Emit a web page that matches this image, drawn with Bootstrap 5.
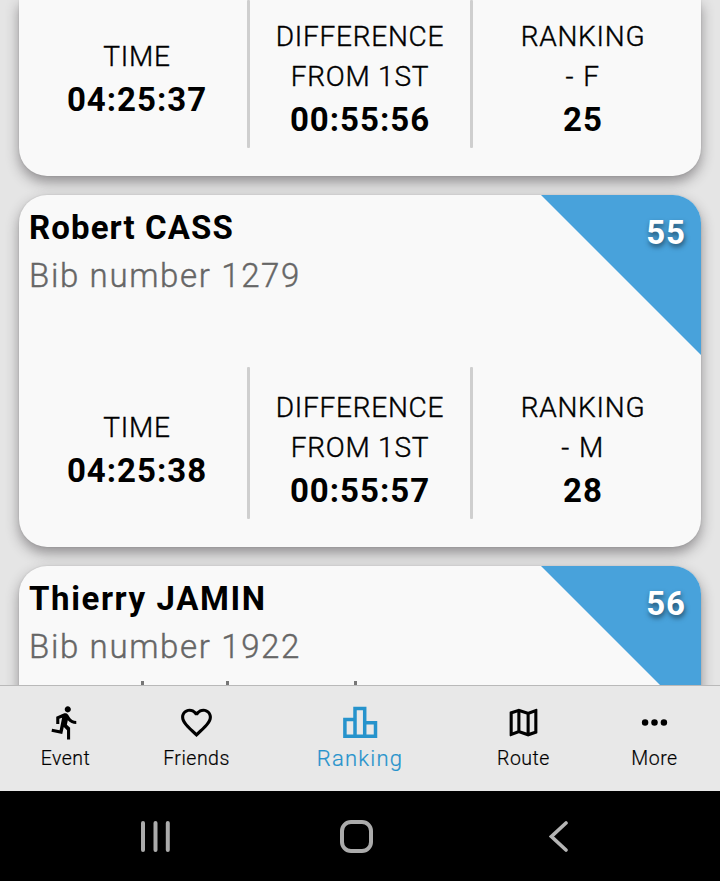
<!DOCTYPE html>
<html lang="en">
<head>
<meta charset="utf-8">
<meta name="viewport" content="width=device-width, initial-scale=1">
<title>Ranking</title>
<link href="https://cdn.jsdelivr.net/npm/bootstrap@5.3.0/dist/css/bootstrap.min.css" rel="stylesheet">
<style>
  body { font-family: Roboto, "Liberation Sans", sans-serif; color: #000; background: #e5e5e5; }
  .phone { height: 881px; }
  .results { padding: 0 19px; gap: 19px; min-height: 0; background: #e5e5e5; }
  .result { --bs-card-border-width: 0; --bs-card-border-radius: 28px; --bs-card-bg: #f9f9f9;
    height: 352px; flex: none; color: #000; box-shadow: 0 6px 13px rgba(45, 40, 45, .45), 0 0 2px rgba(0, 0, 0, .12); }
  .result-tail { height: 176px; border-top-left-radius: 0; border-top-right-radius: 0; }
  .result-head { height: 172px; padding: 9px 10px 0; }
  .runner { font-size: 33px; line-height: 48px; font-weight: 700; letter-spacing: 1.1px; }
  .runner-wide { letter-spacing: 1.6px; }
  .bib { font-size: 33px; line-height: 48px; font-weight: 300; letter-spacing: 1.65px; color: #666; -webkit-text-stroke: .4px #666; }
  .corner { width: 160px; height: 160px; border-top-right-radius: 28px; overflow: hidden; }
  .corner-fill { width: 160px; height: 160px; background: #48a2db; clip-path: polygon(0 0, 100% 0, 100% 100%); }
  .place { top: 14px; right: 15px; font-size: 33px; line-height: 48px; font-weight: 700; letter-spacing: 1px; color: #fff; text-shadow: 1px 3px 5px rgba(0, 0, 0, .5); }
  .stats { height: 152px; padding: 0 6px 0 8px; }
  .result-tail .stats { height: 148px; }
  .result-tail .stat { padding-top: 12px; }
  .stat { width: 220px; padding-top: 16px; }
  .rule-v { width: 3px; background: #cfcfcf; border-radius: 1px; }
  .stat-name { font-size: 28px; line-height: 40px; font-weight: 300; letter-spacing: .75px; -webkit-text-stroke: .4px #000; }
  .stat-name.ls-wide { letter-spacing: 1.5px; }
  .stat-value { font-size: 33px; line-height: 46px; font-weight: 700; letter-spacing: 1px; }
  .ticks { margin-top: 10px; padding-left: 112px; }
  .ticks span { width: 3px; height: 5px; background: #777; }
  .tick-b { margin-left: 82px; }
  .tick-c { margin-left: 125px; }
  .tabs { height: 106px; background: #e8e8e8; border-top: 1px solid #b9b9b9; }
  .tab { width: 131px; padding-top: 18px; font-size: 19.5px; line-height: 36px; font-weight: 300; letter-spacing: .5px; color: #000; text-decoration: none; -webkit-text-stroke: .2px currentColor; }
  .tab-main { width: 196px; padding-top: 17px; font-size: 22px; line-height: 38px; letter-spacing: 1.2px; color: #2693cc; }
  .tab svg { width: 37px; height: 37px; display: block; fill: currentColor; }
  .system { height: 90px; background: #000; padding: 0 149px 0 139px; }
</style>
<script src="https://cdn.jsdelivr.net/npm/bootstrap@5.3.0/dist/js/bootstrap.bundle.min.js"></script>
</head>
<body>
<div class="phone d-flex flex-column overflow-hidden">
  <main class="results d-flex flex-column flex-grow-1 overflow-hidden">
    <article class="card result result-tail">
      <div class="stats d-flex text-center">
        <div class="stat d-flex flex-column justify-content-center"><div class="stat-name">TIME</div><div class="stat-value">04:25:37</div></div>
        <div class="rule-v"></div>
        <div class="stat d-flex flex-column justify-content-center"><div class="stat-name">DIFFERENCE<br>FROM 1ST</div><div class="stat-value">00:55:56</div></div>
        <div class="rule-v"></div>
        <div class="stat d-flex flex-column justify-content-center"><div class="stat-name">RANKING</div><div class="stat-name ls-wide">- F</div><div class="stat-value">25</div></div>
      </div>
    </article>

    <article class="card result">
      <div class="result-head">
        <div class="runner">Robert CASS</div>
        <div class="bib">Bib number 1279</div>
      </div>
      <div class="corner position-absolute top-0 end-0"><div class="corner-fill"></div><span class="place position-absolute">55</span></div>
      <div class="stats d-flex text-center">
        <div class="stat d-flex flex-column justify-content-center"><div class="stat-name">TIME</div><div class="stat-value">04:25:38</div></div>
        <div class="rule-v"></div>
        <div class="stat d-flex flex-column justify-content-center"><div class="stat-name">DIFFERENCE<br>FROM 1ST</div><div class="stat-value">00:55:57</div></div>
        <div class="rule-v"></div>
        <div class="stat d-flex flex-column justify-content-center"><div class="stat-name">RANKING</div><div class="stat-name ls-wide">- M</div><div class="stat-value">28</div></div>
      </div>
    </article>

    <article class="card result">
      <div class="result-head">
        <div class="runner runner-wide">Thierry JAMIN</div>
        <div class="bib">Bib number 1922</div>
        <div class="ticks d-flex"><span></span><span class="tick-b"></span><span class="tick-c"></span></div>
      </div>
      <div class="corner position-absolute top-0 end-0"><div class="corner-fill"></div><span class="place position-absolute">56</span></div>
    </article>
  </main>

  <nav class="tabs d-flex flex-shrink-0">
    <a class="tab d-flex flex-column align-items-center" href="#">
      <svg viewBox="0 0 24 24"><path d="M13.49 5.48c1.1 0 2-.9 2-2s-.9-2-2-2-2 .9-2 2 .9 2 2 2zm-3.6 13.9l1-4.4 2.1 2v6h2v-7.5l-2.1-2 .6-3c1.3 1.5 3.3 2.5 5.5 2.5v-2c-1.9 0-3.5-1-4.3-2.4l-1-1.6c-.4-.6-1-1-1.7-1-.3 0-.5.1-.8.1l-5.2 2.2v4.7h2v-3.4l1.8-.7-1.6 8.1-4.9-1-.4 2 7 1.4z"/></svg>
      <span>Event</span>
    </a>
    <a class="tab d-flex flex-column align-items-center" href="#">
      <svg viewBox="0 0 24 24"><path d="M12.1 18.55l-.1.1-.11-.1C7.14 14.24 4 11.39 4 8.5 4 6.5 5.5 5 7.5 5c1.54 0 3.04 1 3.57 2.36h1.86C13.46 6 14.96 5 16.5 5c2 0 3.5 1.5 3.5 3.5 0 2.89-3.14 5.74-7.9 10.05M16.5 3c-1.74 0-3.41.81-4.5 2.08C10.91 3.81 9.24 3 7.5 3 4.42 3 2 5.41 2 8.5c0 3.77 3.4 6.86 8.55 11.53L12 21.35l1.45-1.32C18.6 15.36 22 12.27 22 8.5 22 5.41 19.58 3 16.5 3z"/></svg>
      <span>Friends</span>
    </a>
    <a class="tab tab-main d-flex flex-column align-items-center" href="#">
      <svg viewBox="0 0 37 37"><path fill="none" stroke="currentColor" stroke-width="3.5" d="M13 33.200H2.900V16.500H13M13 33.200V5.400h9.700v27.800zM22.700 19.700h10.800v13.500h-10.800"/></svg>
      <span>Ranking</span>
    </a>
    <a class="tab d-flex flex-column align-items-center" href="#">
      <svg viewBox="0 0 24 24"><path d="M20.5 3l-.16.03L15 5.1 9 3 3.36 4.9c-.21.07-.36.25-.36.48V20.5c0 .28.22.5.5.5l.16-.03L9 18.9l6 2.1 5.64-1.9c.21-.07.36-.25.36-.48V3.5c0-.28-.22-.5-.5-.5zM10 5.47l4 1.4v11.66l-4-1.4V5.47zm-5 .99l3-1.01v11.7l-3 1.16V6.46zm14 11.08l-3 1.01V6.86l3-1.16v11.84z"/></svg>
      <span>Route</span>
    </a>
    <a class="tab d-flex flex-column align-items-center" href="#">
      <svg viewBox="0 0 24 24"><circle cx="5.900" cy="12" r="2.100"/><circle cx="12" cy="12" r="2.100"/><circle cx="18.100" cy="12" r="2.100"/></svg>
      <span>More</span>
    </a>
  </nav>

  <footer class="system d-flex align-items-center justify-content-between flex-shrink-0">
    <svg width="32" height="36" viewBox="0 0 32 36" stroke="#ababab" stroke-width="4" stroke-linecap="round"><path d="M4 5v27M16.500 5v27M28.800 5v27"/></svg>
    <svg class="overflow-visible" width="36" height="36" viewBox="0 0 36 36" fill="none" stroke="#ababab" stroke-width="4"><rect x="0" y="4" width="29" height="29" rx="9"/></svg>
    <svg width="22" height="36" viewBox="0 0 22 36" fill="none" stroke="#b5b5b5" stroke-width="3.600" stroke-linecap="round"><path d="M17 5L2.500 18.500 17 32"/></svg>
  </footer>
</div>
</body>
</html>
